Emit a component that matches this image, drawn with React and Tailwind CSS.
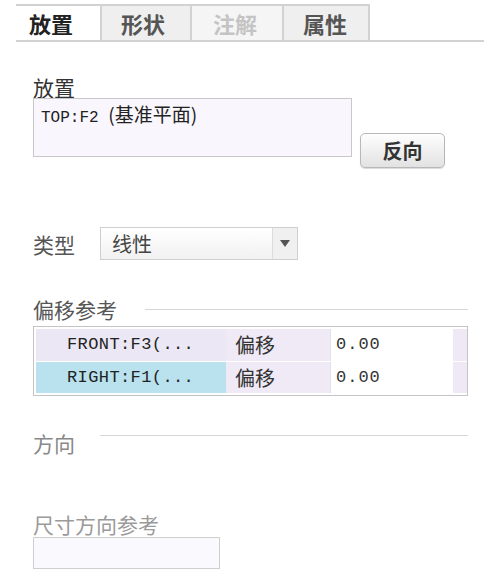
import React from 'react';

const TABS = [
  { id: 'place', label: '放置', w: 'w-[84px]', pl: 'pl-[13px]', cls: 'bg-white text-[#222]' },
  { id: 'shape', label: '形状', w: 'w-[90px]', pl: 'pl-[19px]', cls: 'bg-[#efefef] text-[#555]' },
  { id: 'note', label: '注解', w: 'w-[92px]', pl: 'pl-[21px]', cls: 'bg-[#f5f5f5] text-[#c4c4c4]' },
  { id: 'props', label: '属性', w: 'w-[88px]', pl: 'pl-[19px]', cls: 'bg-[#efefef] text-[#555]' },
];

const ROWS = [
  { ref: 'FRONT:F3(...', kind: '偏移', val: '0.00', bg: 'bg-[#ece7f5]' },
  { ref: 'RIGHT:F1(...', kind: '偏移', val: '0.00', bg: 'bg-[#b9e1ee]' },
];

const cjk = { fontFamily: '"Noto Sans CJK SC", "Noto Sans", sans-serif' };
const mono = { fontFamily: '"Liberation Mono", "Noto Sans CJK SC", monospace' };

function SectionTitle({ text, lineGap, lineTop, color }) {
  return (
    <div className="flex h-[22px] items-start pr-4">
      <span className={`text-[21px] leading-[22px] ${color}`}>{text}</span>
      <div className={`flex-1 border-t border-[#d6d6d6] ${lineGap} ${lineTop}`} />
    </div>
  );
}

export default function App() {
  return (
    <div className="relative h-[576px] w-[484px] overflow-hidden bg-white" style={cjk}>
      {/* Pestañas */}
      <div className="ml-4 mt-1 flex h-[38px] border-b-2 border-[#d2d2d2]">
        {TABS.map((t, i) => (
          <div
            key={t.id}
            className={`flex h-full items-center border-t-2 border-[#d2d2d2] ${i > 0 ? 'border-l-2' : ''} ${i === TABS.length - 1 ? 'border-r-2' : ''} ${t.w} ${t.pl} ${t.cls}`}
          >
            <span className="text-[22px] font-bold leading-none">{t.label}</span>
          </div>
        ))}
      </div>

      <div className="pl-[33px]">
        {/* Colocación */}
        <div className="mt-[34px] h-[22px] text-[21px] leading-[22px] text-[#333]">放置</div>
        <div className="flex items-start">
          <div className="h-[59px] w-[319px] border border-[#c8c8c8] bg-[#f9f7fd] pl-[7px] pt-[4px] text-[#222]">
            <span className="text-[16px] leading-[20px]" style={mono}>TOP:F2 </span>
            <span className="text-[19px] leading-[20px]" style={cjk}>(基准平面)</span>
          </div>
          <button className="ml-[8px] mt-[35px] flex h-[35px] w-[85px] items-center justify-center rounded-[5px] border border-[#b8b8b8] bg-gradient-to-b from-[#fefefe] to-[#e2e2e2] shadow-[0_1px_1px_rgba(0,0,0,0.15)]">
            <span className="text-[20px] font-bold leading-none text-[#333]">反向</span>
          </button>
        </div>

        {/* Tipo */}
        <div className="mt-[59px] flex items-center">
          <span className="w-[67px] text-[21px] leading-[22px] text-[#555]">类型</span>
          <div className="flex h-[33px] w-[198px] border border-[#cfcfcf] bg-gradient-to-b from-white to-[#f1f1f1]">
            <div className="flex flex-1 items-center pl-[11px] text-[20px] text-[#444]">线性</div>
            <div className="flex w-[25px] items-center justify-center border-l border-[#dcdcdc] bg-[#f0f0f0]">
              <svg width="10" height="7" viewBox="0 0 10 7">
                <path d="M0 0 L10 0 L5 7 Z" fill="#555" />
              </svg>
            </div>
          </div>
        </div>

        {/* Referencias de desplazamiento */}
        <div className="mt-[38px]">
          <SectionTitle text="偏移参考" lineGap="ml-[28px]" lineTop="mt-[11px]" color="text-[#555]" />
        </div>
        <div className="mt-[6px] mr-4 border border-[#c4c4c4] p-[2px] pr-0">
          {ROWS.map((r, i) => (
            <div key={i} className={`flex h-[32px] ${i > 0 ? 'border-t border-white' : ''}`}>
              <div className={`flex w-[190px] items-center pl-[31px] text-[17px] tracking-[0.4px] text-[#222] ${r.bg}`} style={mono}>
                {r.ref}
              </div>
              <div className="flex w-[104px] items-center bg-[#efeaf6] pl-[9px] text-[20px] text-[#333]">
                {r.kind}
              </div>
              <div className="flex w-[123px] items-center border-l border-[#e2e2e2] bg-white pl-[5px] text-[17px] tracking-[1px] text-[#333]" style={mono}>
                {r.val}
              </div>
              <div className="flex-1 bg-[#eee9f5]" />
            </div>
          ))}
        </div>

        {/* Dirección */}
        <div className="mt-[36px]">
          <SectionTitle text="方向" lineGap="ml-[25px]" lineTop="mt-[3px]" color="text-[#888]" />
        </div>

        {/* Referencia de dirección de cota */}
        <div className="mt-[59px] h-[22px] text-[21px] leading-[22px] text-[#9a9a9a]">尺寸方向参考</div>
        <div className="mt-[2px] h-[32px] w-[187px] border border-[#cfcfcf] bg-[#faf9fd]" />
      </div>
    </div>
  );
}
